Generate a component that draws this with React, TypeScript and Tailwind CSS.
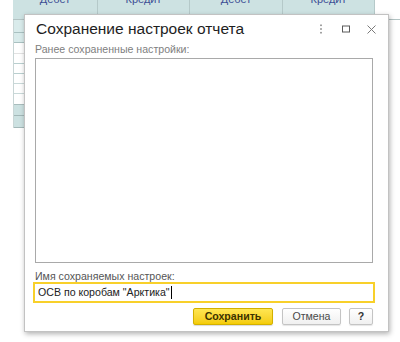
const rows = [
  { h: 'h-[13px]', bg: 'bg-[#d9ebeb]', line: 'border-[#a9c1c1]' },
  { h: 'h-[10px]', bg: 'bg-[#d9ebeb]', line: 'border-[#a9c1c1]' },
  { h: 'h-[11px]', bg: 'bg-white', line: 'border-[#e2e2e2]' },
  { h: 'h-[10px]', bg: 'bg-white', line: 'border-[#b9cfcf]' },
  { h: 'h-[10px]', bg: 'bg-white', line: 'border-[#b9cfcf]' },
  { h: 'h-[10px]', bg: 'bg-white', line: 'border-[#c9d9d9]' },
  { h: 'h-[10px]', bg: 'bg-white', line: 'border-[#c9d9d9]' },
  { h: 'h-[11px]', bg: 'bg-white', line: 'border-[#a9bdbd]' },
  { h: 'h-[11px]', bg: 'bg-[#cce1e1]', line: 'border-[#a3b8b8]' },
  { h: 'h-[12px]', bg: 'bg-[#cce1e1]', line: 'border-[#a3b8b8]' },
]

const headers = [
  { w: 'w-[85px]', label: 'Дебет' },
  { w: 'w-[92px]', label: 'Кредит' },
  { w: 'w-[93px]', label: 'Дебет' },
  { w: 'w-[92px]', label: 'Кредит' },
]

function BackgroundTable() {
  return (
    <div className="flex flex-col">
      <div className="flex ml-[13px] border-b border-[#b3c4c4]">
        <div className="flex h-[19px] bg-[#cde2e2] overflow-hidden">
          {headers.map((c, i) => (
            <div key={i} className={`${c.w} border-r border-[#b5c9c9] text-center`}>
              <div className="-mt-[7px] text-[11px] leading-[12px] text-[#3d4f95]">{c.label}</div>
            </div>
          ))}
        </div>
      </div>
      <div className="ml-[13px] w-[362px] flex flex-col border-l border-[#c9d6d6]">
        {rows.map((r, i) => (
          <div key={i} className={`${r.h} ${r.bg} border-b ${r.line}`} />
        ))}
      </div>
    </div>
  )
}

export default function App() {
  return (
    <div
      className="relative w-[400px] h-[342px] bg-white overflow-hidden"
      style={{ fontFamily: '"Liberation Sans", Arial, sans-serif' }}
    >
      <BackgroundTable />

      {/* dialog window */}
      <div className="absolute left-[24px] top-[14px] w-[365px] h-[318px] bg-white border border-[#c2c2c2] shadow-[1px_2px_5px_rgba(0,0,0,0.3)] flex flex-col">
        <div className="h-[28px] flex items-center pl-[11px] pr-[12px]">
          <div className="flex-1 text-[15.5px] text-[#1e1e1e] leading-none">Сохранение настроек отчета</div>
          <div className="flex items-center gap-[17px]">
            <svg width="8" height="10" viewBox="0 0 8 10">
              <rect x="3.2" y="0.5" width="1.6" height="1.6" fill="#8a8a8a" />
              <rect x="3.2" y="4.2" width="1.6" height="1.6" fill="#8a8a8a" />
              <rect x="3.2" y="7.9" width="1.6" height="1.6" fill="#8a8a8a" />
            </svg>
            <svg width="8" height="8" viewBox="0 0 8 8">
              <rect x="0.5" y="1" width="7" height="6" fill="none" stroke="#5a5a5a" strokeWidth="1" />
            </svg>
            <svg width="9" height="9" viewBox="0 0 9 9">
              <path d="M0.5 0.5 L8.5 8.5 M8.5 0.5 L0.5 8.5" stroke="#7a7a7a" strokeWidth="1" />
            </svg>
          </div>
        </div>

        <div className="flex-1 flex flex-col pl-[10px] pr-[15px] pb-[6px]">
          <div className="h-[12px] text-[10.6px] leading-[12px] text-[#808080]">Ранее сохраненные настройки:</div>
          <div className="mt-[3px] h-[205px] border border-[#a9a9a9] bg-white" />

          <div className="mt-[7px] h-[12px] text-[10.6px] leading-[12px] text-[#555555]">Имя сохраняемых настроек:</div>
          <div className="-mx-[2px] h-[21px] border-2 border-[#f8d02a] flex items-center pl-[3px] text-[10.6px] text-[#222222]">
            <span>ОСВ по коробам "Арктика"</span>
            <span className="inline-block w-px h-[13px] bg-black ml-[1px]" />
          </div>

          <div className="mt-[5px] flex justify-end items-center">
            <button className="w-[80px] h-[17px] rounded-[2px] border border-[#d3b000] bg-gradient-to-b from-[#ffe650] to-[#f4cc00] text-[10.6px] font-bold text-[#3b3200] leading-none shadow-[0_1px_1px_rgba(0,0,0,0.15)]">
              Сохранить
            </button>
            <button className="ml-[9px] w-[59px] h-[17px] rounded-[2px] border border-[#c4c4c4] bg-gradient-to-b from-white to-[#f0f0f0] text-[10.6px] text-[#4a4a4a] leading-none shadow-[0_1px_1px_rgba(0,0,0,0.1)]">
              Отмена
            </button>
            <button className="ml-[8px] w-[24px] h-[17px] rounded-[2px] border border-[#c4c4c4] bg-gradient-to-b from-white to-[#f0f0f0] text-[10.6px] font-bold text-[#333333] leading-none shadow-[0_1px_1px_rgba(0,0,0,0.1)]">
              ?
            </button>
          </div>
        </div>
      </div>
    </div>
  )
}
